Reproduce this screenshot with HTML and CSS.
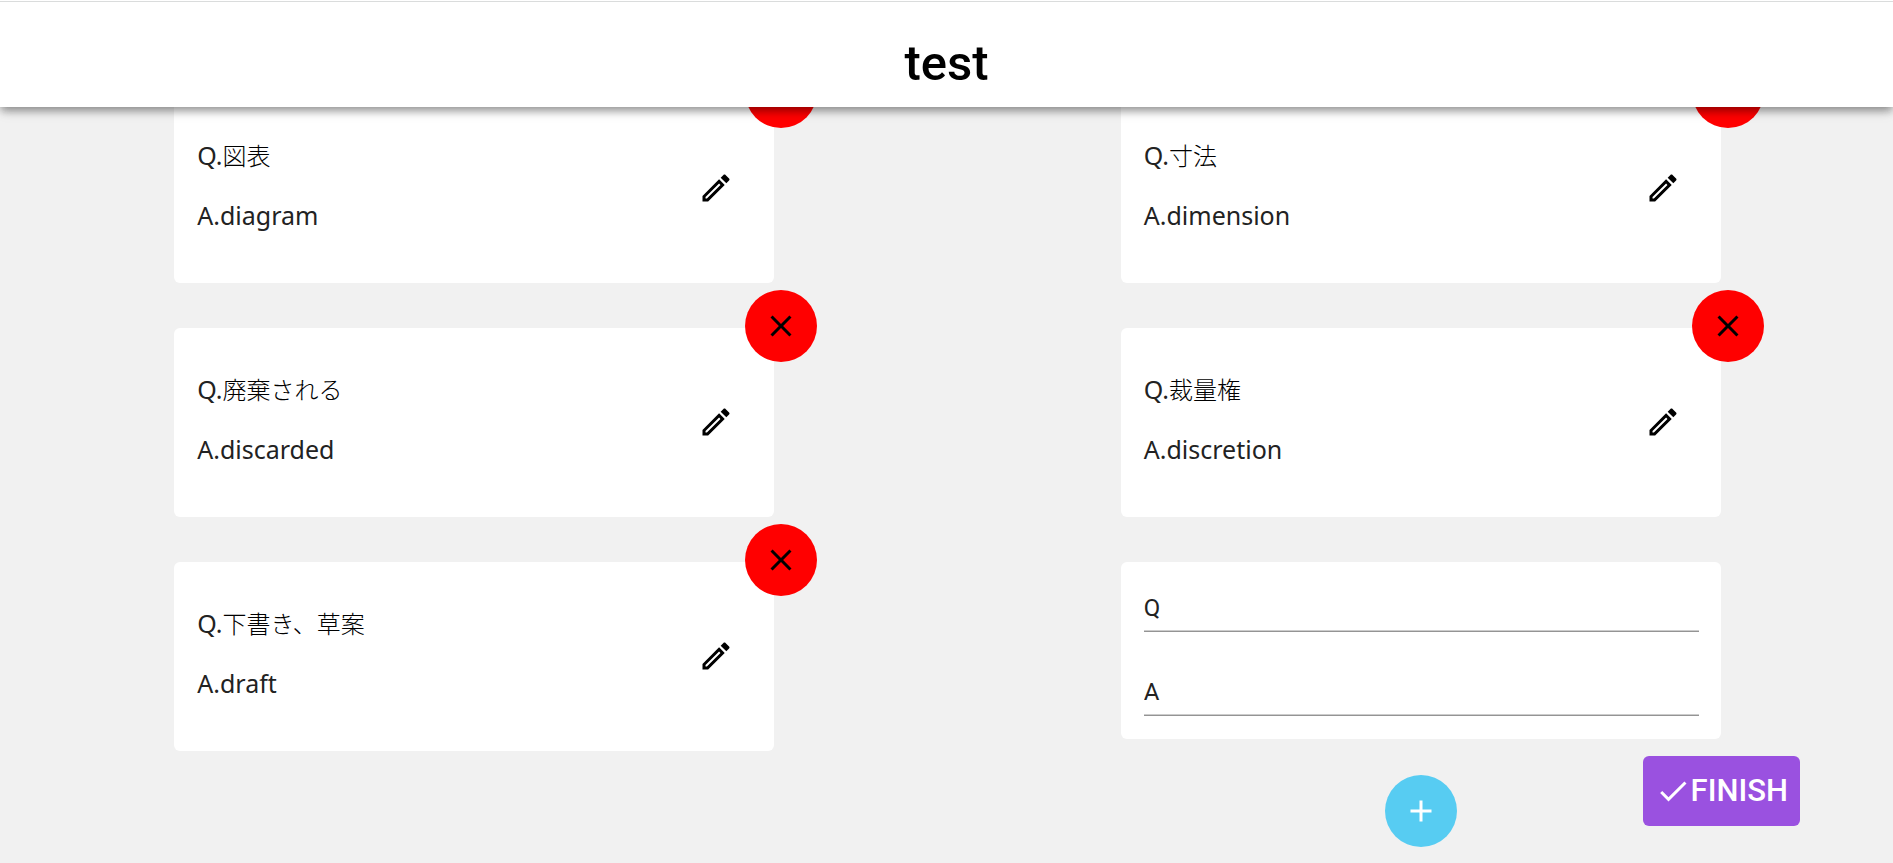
FILE: index.html
```html
<!DOCTYPE html>
<html lang="ja">
<head>
<meta charset="utf-8">
<title>test</title>
<link rel="stylesheet" href="styles.css">
</head>
<body>
<svg class="sprite" aria-hidden="true">
  <symbol id="edit" viewBox="0 0 24 24"><path d="M14.06 9.02l.92.92L5.92 19H5v-.92l9.06-9.06M17.66 3c-.25 0-.51.1-.7.29l-1.83 1.83 3.75 3.75 1.83-1.83c.39-.39.39-1.02 0-1.41l-2.34-2.34c-.2-.2-.45-.29-.71-.29zm-3.6 3.19L3 17.25V21h3.75L17.81 9.94l-3.75-3.75z"/></symbol>
  <symbol id="close" viewBox="0 0 24 24"><path d="M19 6.41L17.59 5 12 10.59 6.41 5 5 6.41 10.59 12 5 17.59 6.41 19 12 13.41 17.59 19 19 17.59 13.41 12z"/></symbol>
  <symbol id="plus" viewBox="0 0 24 24"><path d="M19 13h-6v6h-2v-6H5v-2h6V5h2v6h6v2z"/></symbol>
  <symbol id="check" viewBox="0 0 24 24"><path d="M9 16.17L4.83 12l-1.42 1.41L9 19 21 7l-1.41-1.41z"/></symbol>
</svg>
<header class="header">
  <h1 class="title">test</h1>
</header>
<main class="deck">
  <article class="card">
    <div class="text"><p>Q.<span class="japanese">図表</span></p><p>A.diagram</p></div>
    <button class="edit" type="button" aria-label="Edit"><svg class="icon"><use href="#edit"/></svg></button>
    <button class="round delete" type="button" aria-label="Delete"><svg class="icon"><use href="#close"/></svg></button>
  </article>
  <article class="card">
    <div class="text"><p>Q.<span class="japanese">寸法</span></p><p>A.dimension</p></div>
    <button class="edit" type="button" aria-label="Edit"><svg class="icon"><use href="#edit"/></svg></button>
    <button class="round delete" type="button" aria-label="Delete"><svg class="icon"><use href="#close"/></svg></button>
  </article>
  <article class="card">
    <div class="text"><p>Q.<span class="japanese">廃棄される</span></p><p>A.discarded</p></div>
    <button class="edit" type="button" aria-label="Edit"><svg class="icon"><use href="#edit"/></svg></button>
    <button class="round delete" type="button" aria-label="Delete"><svg class="icon"><use href="#close"/></svg></button>
  </article>
  <article class="card">
    <div class="text"><p>Q.<span class="japanese">裁量権</span></p><p>A.discretion</p></div>
    <button class="edit" type="button" aria-label="Edit"><svg class="icon"><use href="#edit"/></svg></button>
    <button class="round delete" type="button" aria-label="Delete"><svg class="icon"><use href="#close"/></svg></button>
  </article>
  <article class="card">
    <div class="text"><p>Q.<span class="japanese">下書き、草案</span></p><p>A.draft</p></div>
    <button class="edit" type="button" aria-label="Edit"><svg class="icon"><use href="#edit"/></svg></button>
    <button class="round delete" type="button" aria-label="Delete"><svg class="icon"><use href="#close"/></svg></button>
  </article>
  <form class="new">
    <div class="fields">
      <input class="field" type="text" placeholder="Q" aria-label="Q">
      <input class="field" type="text" placeholder="A" aria-label="A">
    </div>
    <button class="round add" type="button" aria-label="Add"><svg class="icon"><use href="#plus"/></svg></button>
  </form>
</main>
<button class="finish" type="button"><svg class="icon"><use href="#check"/></svg>FINISH</button>
</body>
</html>
```

FILE: styles.css
```css
* {
  box-sizing: border-box;
}

body {
  margin: 0;
  min-height: 100vh;
  background: #f1f1f1;
  color: #222;
  font-family: "Noto Sans", "Noto Sans CJK JP", sans-serif;
  font-size: 25px;
  line-height: 36px;
}

button {
  padding: 0;
  border: 0;
  background: none;
  cursor: pointer;
}

.sprite {
  display: none;
}

.icon {
  display: block;
  width: 36px;
  height: 36px;
  fill: currentColor;
}

.header {
  position: fixed;
  inset: 0 0 auto;
  z-index: 1;
  padding: 34px 0 13px;
  background: linear-gradient(#dadcdc, #dadcdc) 0 1px / 100% 1px no-repeat #fff;
  box-shadow: 0 4px 8px -2px rgba(0, 0, 0, 0.3), 0 6px 8px rgba(0, 0, 0, 0.14), 0 2px 15px rgba(0, 0, 0, 0.12);
  text-align: center;
}

.title {
  margin: 0;
  color: #000;
  font: 500 49px/60px Roboto, sans-serif;
}

.deck {
  display: grid;
  grid-template-columns: 1fr 1fr;
  justify-items: center;
  align-items: start;
  gap: 45px 2px;
  padding: 94px 0 16px 2px;
}

.card {
  position: relative;
  display: flex;
  align-items: center;
  justify-content: space-between;
  width: 600px;
  padding: 43px 40px 50px 23px;
  border-radius: 6px;
  background: #fff;
}

.text {
  display: grid;
  gap: 24px;
}

.text p {
  height: 36px;
  margin: 0;
}

.japanese {
  color: #000;
  font-size: 24px;
  font-weight: 300;
}

.edit {
  margin-top: 5px;
  color: #000;
}

.round {
  display: grid;
  place-items: center;
  width: 72px;
  height: 72px;
  border-radius: 50%;
}

.delete {
  position: absolute;
  top: -38px;
  right: -43px;
  background: #f00;
  color: #000;
}

.new {
  display: grid;
  justify-items: center;
  gap: 36px;
}

.fields {
  display: grid;
  gap: 36px;
  width: 600px;
  padding: 22px 22px 23px 23px;
  border-radius: 6px;
  background: #fff;
}

.field {
  width: 100%;
  height: 48px;
  padding: 0;
  border: 0;
  border-bottom: 1px solid #949494;
  box-shadow: inset 0 -1px #ccc;
  outline: 0;
  background: none;
  color: #222;
  font: 400 24px/36px Roboto, "Noto Sans CJK JP", sans-serif;
}

.field::placeholder {
  color: #222;
  opacity: 1;
}

.add {
  background: #57ccf2;
  color: #fff;
}

.finish {
  position: fixed;
  right: 93px;
  bottom: 37px;
  display: flex;
  align-items: center;
  padding: 17px 12px;
  border-radius: 6px;
  background: #9a51e0;
  color: #fff;
  font: 500 31px/36px Roboto, sans-serif;
}
```
